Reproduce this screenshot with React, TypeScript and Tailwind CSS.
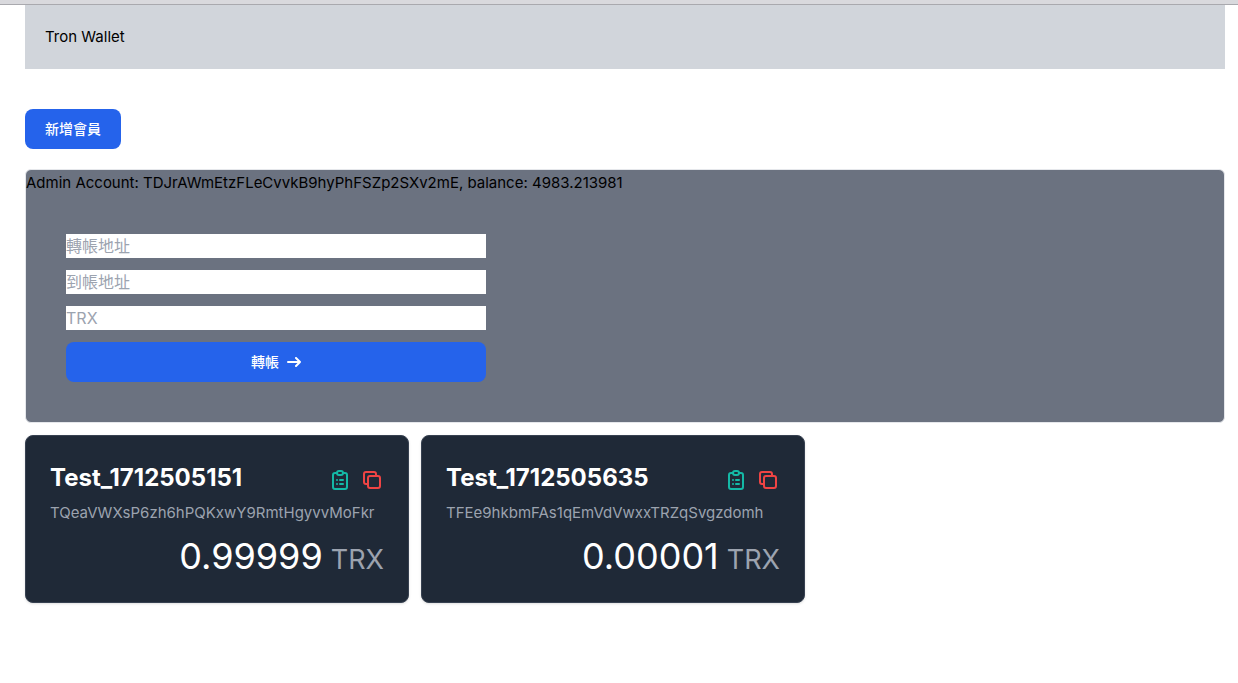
import React from "react";

const accounts = [
  { name: "Test_1712505151", address: "TQeaVWXsP6zh6hPQKxwY9RmtHgyvvMoFkr", balance: "0.99999" },
  { name: "Test_1712505635", address: "TFEe9hkbmFAs1qEmVdVwxxTRZqSvgzdomh", balance: "0.00001" },
];

function ArrowIcon() {
  return (
    <svg className="ml-2 h-2.5 w-3.5" viewBox="0 0 14 10" fill="none" aria-hidden="true">
      <path stroke="currentColor" strokeLinecap="round" strokeLinejoin="round" strokeWidth="2" d="M1 5h12m0 0L9 1m4 4L9 9" />
    </svg>
  );
}

function ClipboardIcon() {
  return (
    <svg className="h-6 w-6" viewBox="0 0 24 24" fill="none" stroke="currentColor" strokeWidth="2" strokeLinecap="round" strokeLinejoin="round" aria-hidden="true">
      <path d="M9 5H7a2 2 0 0 0-2 2v12a2 2 0 0 0 2 2h10a2 2 0 0 0 2-2V7a2 2 0 0 0-2-2h-2" />
      <rect x="9" y="3" width="6" height="4" rx="2" />
      <path d="M9 12h.01M9 16h.01M12 12h3M12 16h3" />
    </svg>
  );
}

function CopyIcon() {
  return (
    <svg className="h-6 w-6" viewBox="0 0 24 24" fill="none" stroke="currentColor" strokeWidth="2" strokeLinecap="round" strokeLinejoin="round" aria-hidden="true">
      <rect x="8" y="8" width="12" height="12" rx="2" />
      <path d="M16 8V6a2 2 0 0 0-2-2H6a2 2 0 0 0-2 2v8a2 2 0 0 0 2 2h2" />
    </svg>
  );
}

function Field({ label }: { label: string }) {
  return (
    <input
      type="text"
      aria-label={label}
      placeholder={label}
      className="h-6 w-full bg-white text-base text-black placeholder:text-[#9ca3af]"
    />
  );
}

export default function App() {
  return (
    <div className="min-h-screen bg-white font-['Inter','Noto_Sans_CJK_TC',sans-serif] text-[15px] leading-[26px] text-black">
      <div className="h-[5px] border-b border-[#a9a9ae] bg-[#d9d9dd]" />
      <div className="pr-[13px] pl-[25px]">
        <header className="flex h-16 items-center bg-[#d1d5db] px-5">Tron Wallet</header>
        <button
          type="button"
          className="mt-10 mb-5 block h-10 rounded-lg bg-[#2563eb] px-5 text-sm font-medium text-white"
        >
          新增會員
        </button>
        <section className="rounded-md border border-[#e5e7eb] bg-[#6b7280]">
          <p>Admin Account: TDJrAWmEtzFLeCvvkB9hyPhFSZp2SXv2mE, balance: 4983.213981</p>
          <form className="flex max-w-[500px] flex-col gap-3 px-10 pt-[38px] pb-10" onSubmit={(e) => e.preventDefault()}>
            <Field label="轉帳地址" />
            <Field label="到帳地址" />
            <Field label="TRX" />
            <button
              type="submit"
              className="flex h-10 items-center justify-center rounded-lg bg-[#2563eb] text-sm font-medium text-white"
            >
              轉帳
              <ArrowIcon />
            </button>
          </form>
        </section>
        <main className="mt-3 flex flex-wrap gap-3">
          {accounts.map((a) => (
            <article key={a.name} className="w-96 rounded-lg border border-[#374151] bg-[#1f2937] p-6 shadow-sm">
              <div className="mb-1 flex h-9 items-center justify-between">
                <h2 className="text-2xl font-bold text-white">{a.name}</h2>
                <div className="flex gap-2 pt-1">
                  <button type="button" aria-label="Details" className="text-[#14b8a6]">
                    <ClipboardIcon />
                  </button>
                  <button type="button" aria-label="Copy" className="text-[#ef4444]">
                    <CopyIcon />
                  </button>
                </div>
              </div>
              <p className="mb-2.5 text-[#9ca3af]">{a.address}</p>
              <p className="flex h-[42px] items-baseline justify-end gap-2 text-4xl text-white">
                {a.balance} <span className="text-[27px] text-[#9ca3af]">TRX</span>
              </p>
            </article>
          ))}
        </main>
      </div>
    </div>
  );
}
